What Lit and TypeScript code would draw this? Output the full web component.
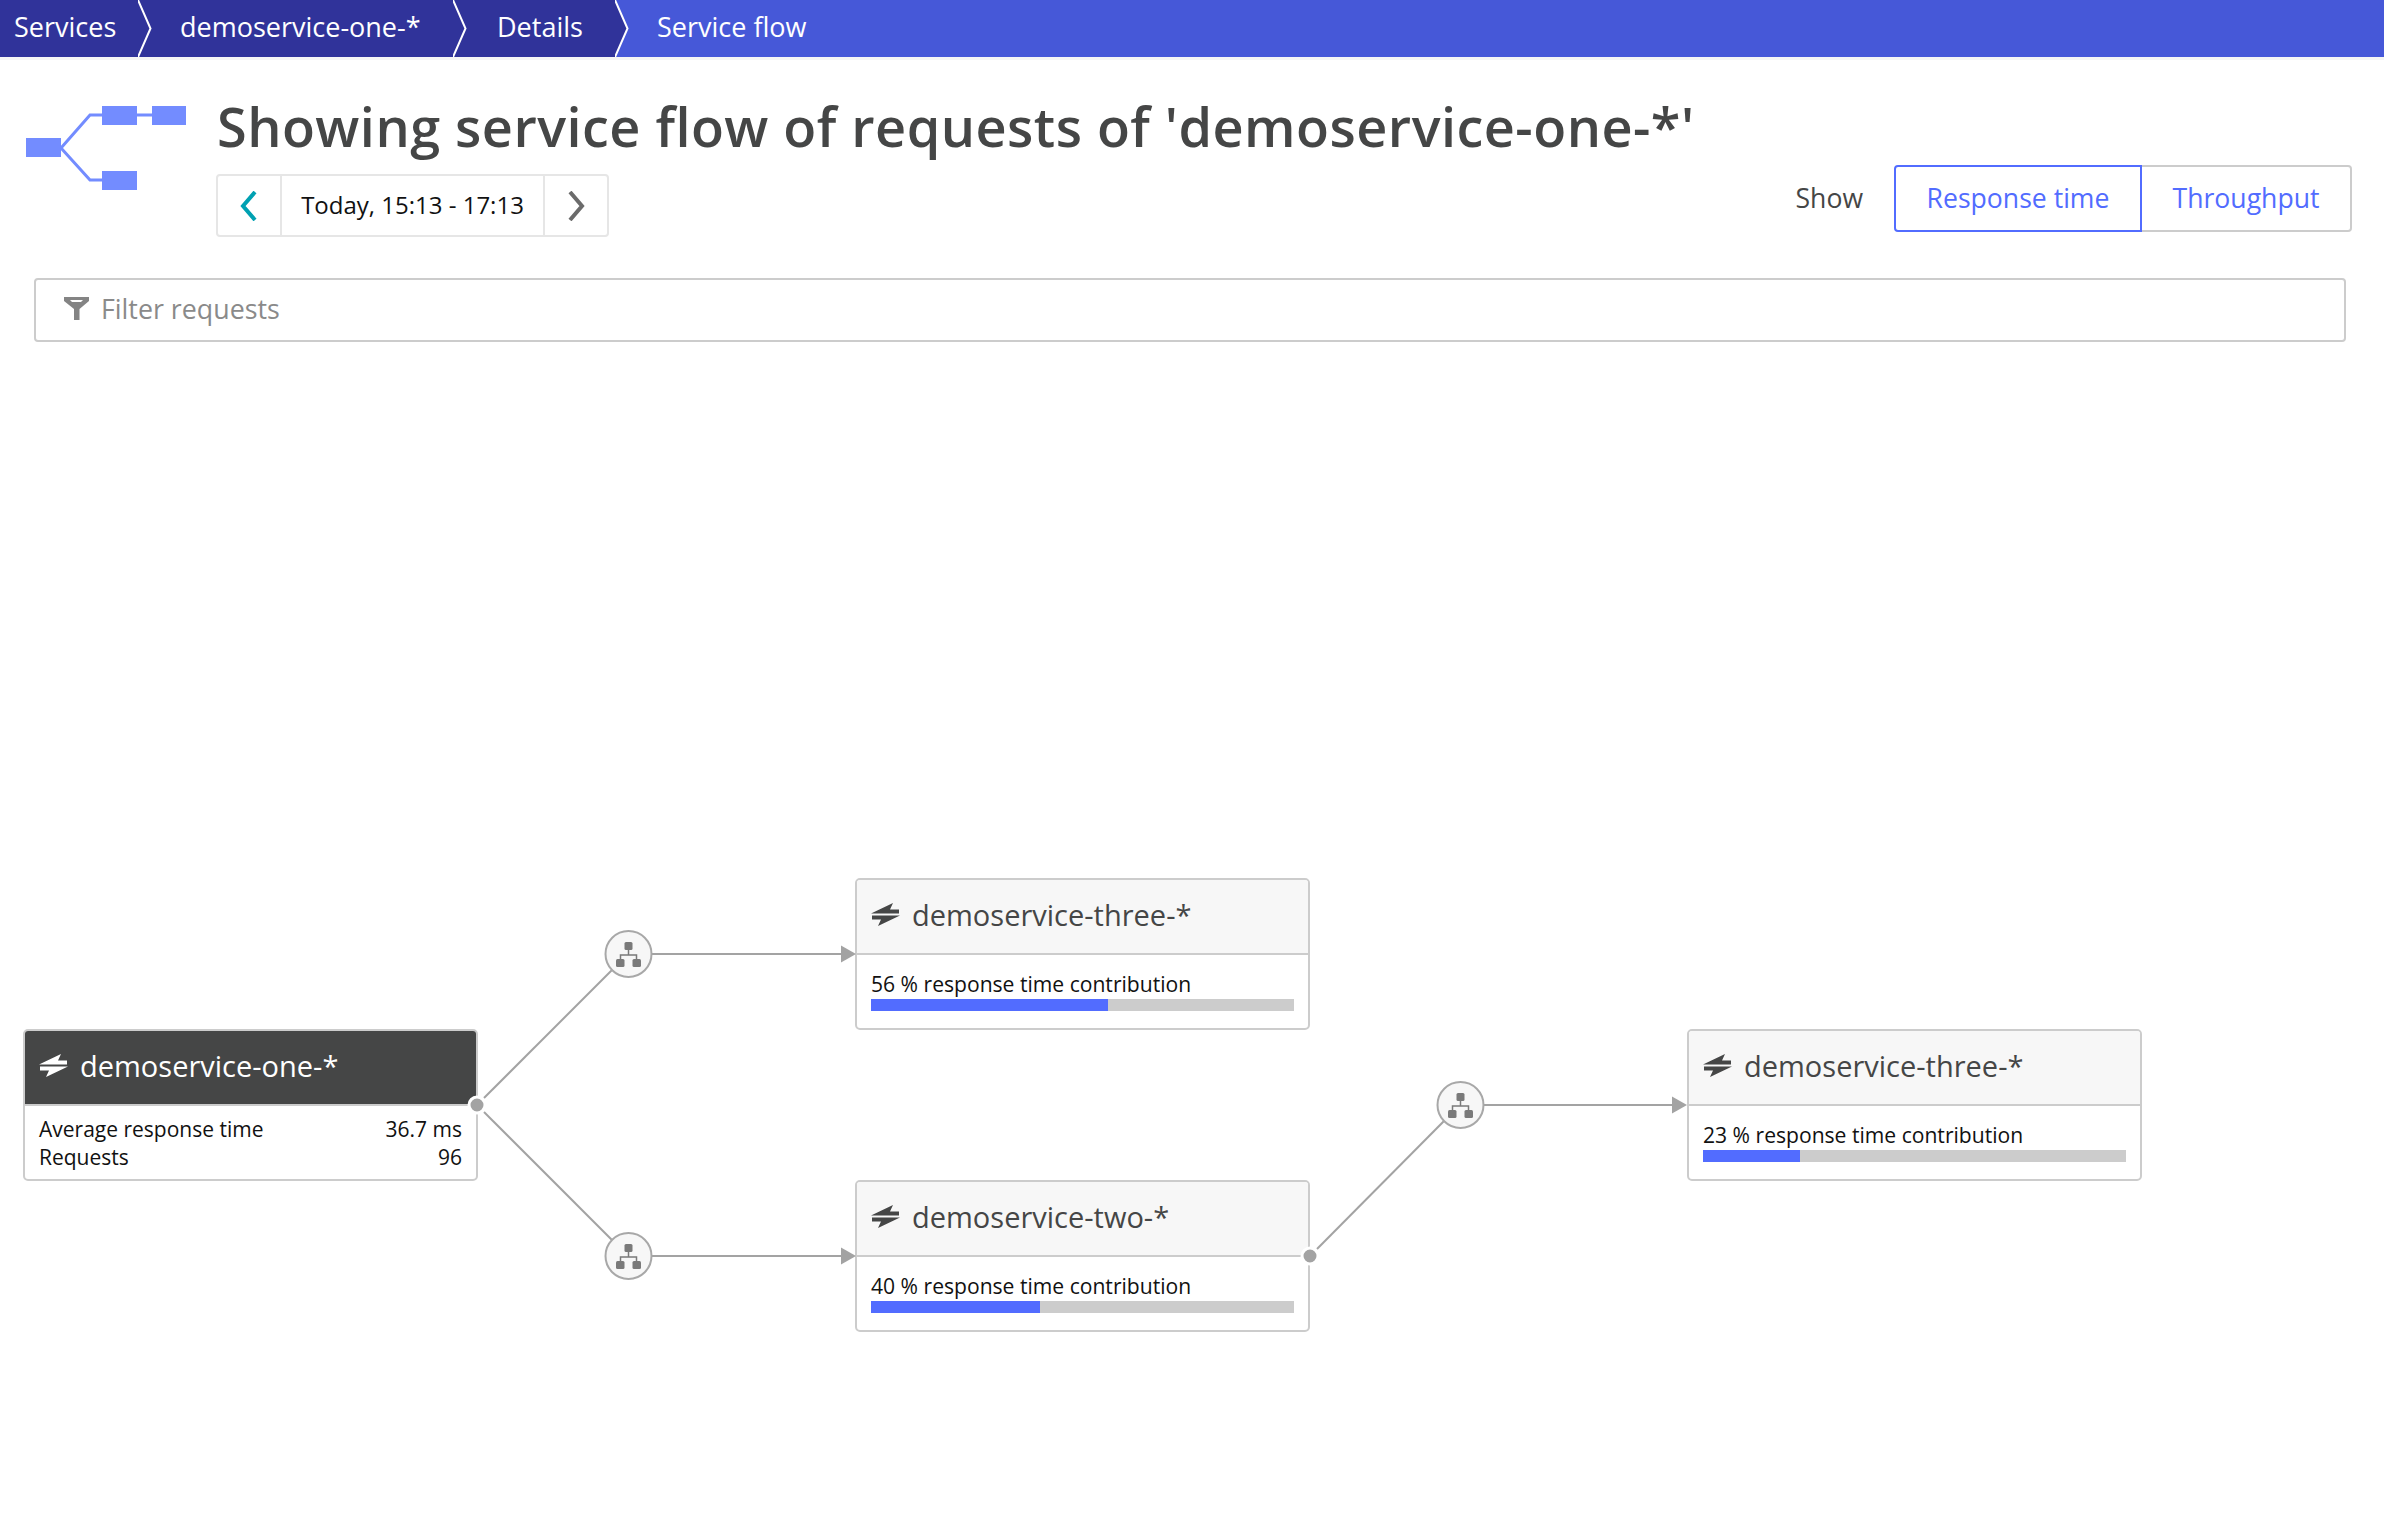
import { LitElement, html, css, svg } from 'lit';
import { customElement } from 'lit/decorators.js';

// canvas coords are page coords minus the 342px of chrome above the diagram
const TOP = 342;

interface ServiceNode {
  name: string;
  x: number;
  y: number;
  pct?: number;
  source?: boolean;
}

const nodes: ServiceNode[] = [
  { name: 'demoservice-one-*', x: 23, y: 1029, source: true },
  { name: 'demoservice-three-*', x: 855, y: 878, pct: 56 },
  { name: 'demoservice-two-*', x: 855, y: 1180, pct: 40 },
  { name: 'demoservice-three-*', x: 1687, y: 1029, pct: 23 },
];

// x1, y1, x2, y2 of the thin diagonal links
const links = [
  [484, 1098, 612, 970],
  [484, 1112, 612, 1240],
  [1317, 1249, 1444, 1121],
];

const hubs = [
  [628.5, 954],
  [628.5, 1256],
  [1460.5, 1105],
];

const dots = [
  [477, 1105],
  [1310, 1256],
];

@customElement('app-root')
export class AppRoot extends LitElement {
  static styles = css`
    :host {
      display: block;
      width: 2384px;
      height: 1539px;
      overflow: hidden;
      background: #fff;
      font-family: 'Open Sans', sans-serif;
      color: #454646;
    }

    .nav {
      display: flex;
      height: 57px;
      background: #4658d8;
      border-bottom: 3px solid #f5f5f5;
      box-sizing: content-box;
      font-size: 27px;
      line-height: 53px;
      color: #fff;
    }

    .crumb {
      background: #30339a;
      white-space: nowrap;
      box-sizing: border-box;
    }

    .crumb.one { width: 138px; padding-left: 14px; }
    .crumb.two { width: 301px; padding-left: 28px; }
    .crumb.three { width: 148px; padding-left: 30px; }
    .crumb.last { background: none; padding-left: 28px; }

    .sep {
      display: block;
      width: 14px;
      height: 57px;
      flex: none;
      background: #30339a;
    }

    .sep.end { background: #4658d8; }

    .head {
      display: grid;
      grid-template-columns: 217px 1fr auto;
      height: 218px;
      box-sizing: border-box;
    }

    .logo {
      display: block;
      margin: 46px 0 0 26px;
    }

    .title {
      margin: 28px 0 0;
      font-size: 54px;
      line-height: 76px;
      font-weight: 600;
      letter-spacing: 0.47px;
      white-space: nowrap;
    }

    .timeframe {
      display: flex;
      width: 393px;
      height: 63px;
      margin: 10px 0 0 -1px;
      border: 2px solid #e6e6e6;
      border-radius: 4px;
      box-sizing: border-box;
      align-items: center;
      color: #111;
      font-size: 24px;
    }

    .step {
      display: flex;
      height: 100%;
      align-items: center;
      justify-content: center;
      box-sizing: border-box;
    }

    .step.prev { width: 64px; border-right: 2px solid #e6e6e6; }
    .step.next { width: 64px; border-left: 2px solid #e6e6e6; }

    .range {
      flex: 1;
      padding-bottom: 2px;
      text-align: center;
      white-space: nowrap;
    }

    .show {
      display: flex;
      align-items: center;
      margin: 105px 32px 0 0;
      height: 67px;
      font-size: 26.6px;
    }

    .show-label { margin-right: 31px; padding-bottom: 2px; }

    .toggle {
      display: flex;
      height: 67px;
      color: #526cff;
    }

    .toggle span {
      display: flex;
      align-items: center;
      justify-content: center;
      box-sizing: border-box;
      padding-bottom: 2px;
      border: 2px solid #ccc;
    }

    .toggle .on {
      width: 248px;
      border-color: #526cff;
      border-radius: 4px 0 0 4px;
    }

    .toggle .off {
      width: 210px;
      border-left: none;
      border-radius: 0 4px 4px 0;
    }

    .filter {
      display: flex;
      align-items: center;
      gap: 12px;
      height: 64px;
      margin: 0 38px 0 34px;
      padding: 0 0 3px 28px;
      border: 2px solid #ccc;
      border-radius: 4px;
      box-sizing: border-box;
      font-size: 26.8px;
      color: #8a8a8a;
    }

    .canvas {
      position: relative;
      height: 1197px;
    }

    .wires {
      position: absolute;
      inset: 0;
    }

    .node {
      position: absolute;
      width: 455px;
      height: 152px;
      border: 2px solid #ccc;
      border-radius: 5px;
      box-sizing: border-box;
      background: #fff;
      overflow: hidden;
    }

    .node-head {
      display: flex;
      align-items: center;
      gap: 12px;
      height: 75px;
      padding: 0 0 4px 14px;
      box-sizing: border-box;
      background: #f7f7f7;
      border-bottom: 2px solid #ccc;
      font-size: 29px;
      color: #454646;
    }

    .source .node-head {
      background: #454646;
      color: #fff;
    }

    .contrib {
      padding: 14px 14px 0;
      font-size: 21.1px;
      line-height: 30px;
      color: #111;
      white-space: nowrap;
    }

    .bar {
      height: 12px;
      background: #ccc;
    }

    .bar div {
      height: 100%;
      background: #526cff;
    }

    .stats {
      display: grid;
      grid-template-columns: 1fr auto;
      padding: 9px 14px 0;
      font-size: 21px;
      line-height: 28px;
      color: #111;
    }

    .stats .num { text-align: right; }

    .service-icon { flex: none; }
  `;

  private arrow(x: number, y: number) {
    return svg`<line x1=${x} y1=${y} x2=${x + 190} y2=${y} stroke="#a3a3a3" stroke-width="2"></line>
      <polygon points="${x + 190},${y - 8.5} ${x + 205},${y} ${x + 190},${y + 8.5}" fill="#a3a3a3"></polygon>`;
  }

  private hub(cx: number, cy: number) {
    return svg`<g transform="translate(${cx},${cy - TOP})">
      <circle r="23" fill="#f7f7f7" stroke="#a8a8a8" stroke-width="2"></circle>
      <rect x="-4" y="-12" width="8" height="8" rx="1.5" fill="#7a7a7a"></rect>
      <rect x="-12.5" y="5" width="8.5" height="8" rx="1.5" fill="#7a7a7a"></rect>
      <rect x="4" y="5" width="8.5" height="8" rx="1.5" fill="#7a7a7a"></rect>
      <path d="M0 -4V1M-8 5V1H8V5" fill="none" stroke="#7a7a7a" stroke-width="1.5"></path>
    </g>`;
  }

  private serviceIcon() {
    return html`<svg class="service-icon" width="29" height="23" viewBox="0 0 29 23" fill="currentColor">
      <polygon points="0,10.5 28,10.5 28,6.5 19,6.5 22,0"></polygon>
      <polygon points="1,12.5 29,12.5 7,23 10,16.5 1,16.5"></polygon>
    </svg>`;
  }

  private renderNode(n: ServiceNode) {
    return html`<div class="node ${n.source ? 'source' : ''}" style="left:${n.x}px;top:${n.y - TOP}px">
      <div class="node-head">${this.serviceIcon()}<span>${n.name}</span></div>
      ${n.source
        ? html`<div class="stats">
            <span>Average response time</span><span class="num">36.7 ms</span>
            <span>Requests</span><span class="num">96</span>
          </div>`
        : html`<div class="contrib">
            ${n.pct} % response time contribution
            <div class="bar"><div style="width:${n.pct}%"></div></div>
          </div>`}
    </div>`;
  }

  render() {
    return html`
      <div class="nav">
        <div class="crumb one">Services</div>
        <svg class="sep" viewBox="0 0 14 57">
          <path d="M0 0L12.5 28.5L0 57" fill="none" stroke="#fff" stroke-width="2"></path>
        </svg>
        <div class="crumb two">demoservice-one-*</div>
        <svg class="sep" viewBox="0 0 14 57">
          <path d="M0 0L12.5 28.5L0 57" fill="none" stroke="#fff" stroke-width="2"></path>
        </svg>
        <div class="crumb three">Details</div>
        <svg class="sep end" viewBox="0 0 14 57">
          <path d="M0 0L13 28.5L0 57Z" fill="#30339a"></path>
          <path d="M0 0L12.5 28.5L0 57" fill="none" stroke="#fff" stroke-width="2"></path>
        </svg>
        <div class="crumb last">Service flow</div>
      </div>

      <div class="head">
        <svg class="logo" width="161" height="85" viewBox="0 0 161 85">
          <path d="M35 42L64 9H76M111 9H126M35 42L64 74H76" fill="none" stroke="#738cff" stroke-width="3"></path>
          <rect x="0" y="32" width="35" height="19" fill="#738cff"></rect>
          <rect x="76" y="0" width="35" height="19" fill="#738cff"></rect>
          <rect x="126" y="0" width="34" height="19" fill="#738cff"></rect>
          <rect x="76" y="65" width="35" height="19" fill="#738cff"></rect>
        </svg>
        <div>
          <h1 class="title">Showing service flow of requests of 'demoservice-one-*'</h1>
          <div class="timeframe">
            <div class="step prev">
              <svg width="18" height="30" viewBox="0 0 18 30"><path d="M15 1L3 15L15 29" fill="none" stroke="#00a1b2" stroke-width="4"></path></svg>
            </div>
            <div class="range">Today, 15:13 - 17:13</div>
            <div class="step next">
              <svg width="18" height="30" viewBox="0 0 18 30"><path d="M3 1L15 15L3 29" fill="none" stroke="#6b6b6b" stroke-width="4"></path></svg>
            </div>
          </div>
        </div>
        <div class="show">
          <span class="show-label">Show</span>
          <div class="toggle">
            <span class="on">Response time</span>
            <span class="off">Throughput</span>
          </div>
        </div>
      </div>

      <div class="filter">
        <svg width="25" height="23" viewBox="0 0 25 23">
          <path d="M0 0H25V4L15.5 12V23H10V12L0 4Z" fill="#848484"></path>
          <path d="M6 3H19L17 5H8Z" fill="#fff"></path>
        </svg>
        <span>Filter requests</span>
      </div>

      <div class="canvas">
        <svg class="wires" width="2384" height="1197">
          ${links.map(
            ([x1, y1, x2, y2]) =>
              svg`<line x1=${x1} y1=${y1 - TOP} x2=${x2} y2=${y2 - TOP} stroke="#a3a3a3" stroke-width="2"></line>`
          )}
        </svg>
        ${nodes.map((n) => this.renderNode(n))}
        <svg class="wires" width="2384" height="1197">
          ${this.arrow(651, 954 - TOP)}
          ${this.arrow(651, 1256 - TOP)}
          ${this.arrow(1482, 1105 - TOP)}
          ${hubs.map(([x, y]) => this.hub(x, y))}
          ${dots.map(
            ([x, y]) => svg`<circle cx=${x} cy=${y - TOP} r="8" fill="#a3a3a3" stroke="#fff" stroke-width="3"></circle>`
          )}
        </svg>
      </div>
    `;
  }
}
